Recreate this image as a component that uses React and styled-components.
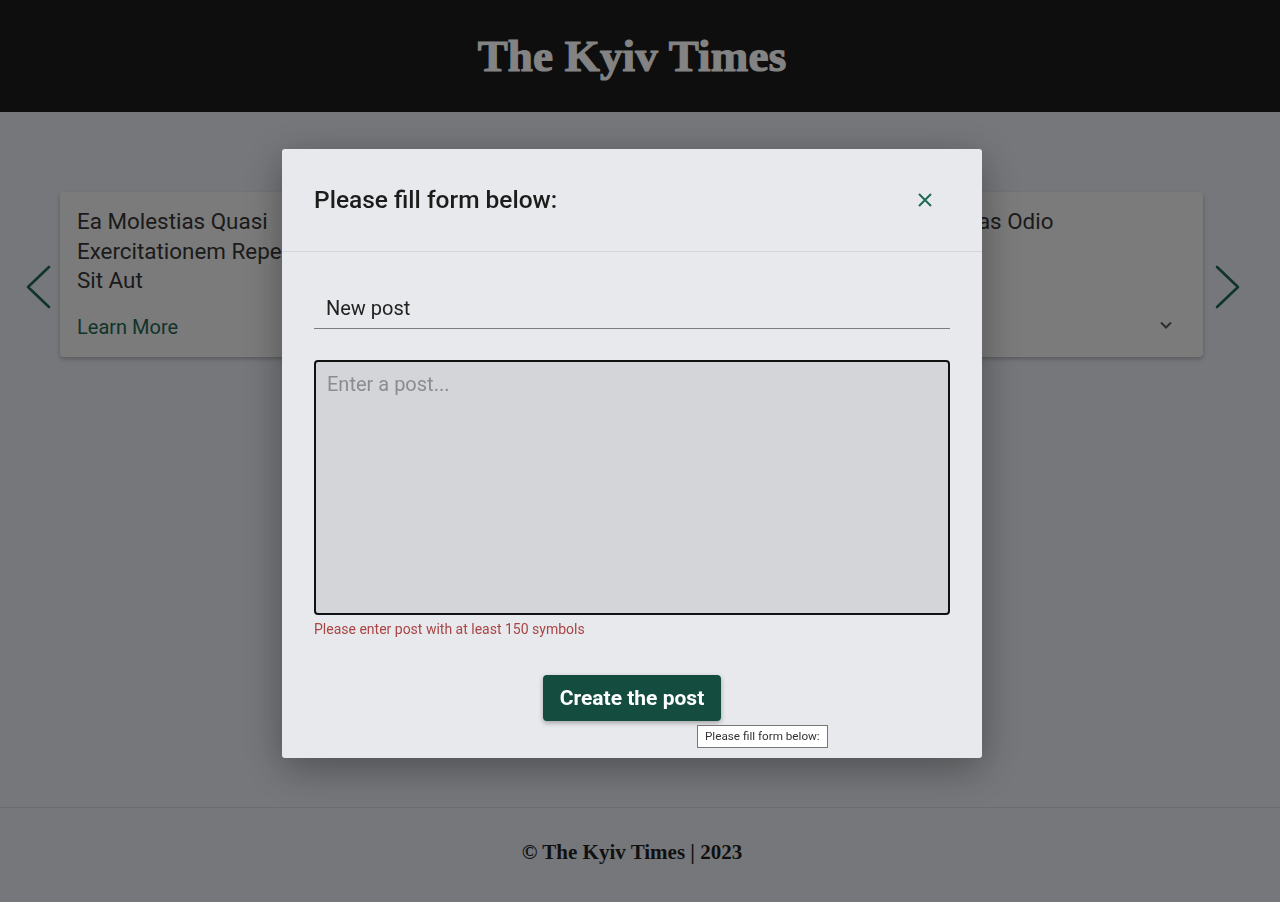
import React, { useState } from "react";
import styled, { createGlobalStyle } from "styled-components";

const GlobalStyle = createGlobalStyle`
  * {
    box-sizing: border-box;
  }
  html, body {
    margin: 0;
    padding: 0;
    background: #dadce2;
  }
  body {
    font-family: Roboto, "Liberation Sans", sans-serif;
  }
`;

const posts = [
  { id: 3, title: "Ea Molestias Quasi Exercitationem Repellat Qui Ipsa Sit Aut" },
  { id: 4, title: "Eum Et Est Occaecati" },
  { id: 5, title: "Nesciunt Quas Odio" },
];

function Arrow({ dir }) {
  const d = dir === "left" ? "M24 2 L3 22 L24 42" : "M2 2 L23 22 L2 42";
  return (
    <svg width="26" height="44" viewBox="0 0 26 44" fill="none">
      <path d={d} stroke="#1f5f4f" strokeWidth="2.6" strokeLinecap="round" strokeLinejoin="round" />
    </svg>
  );
}

function Chevron() {
  return (
    <svg width="14" height="10" viewBox="0 0 14 10" fill="none">
      <path d="M2 2.5 L7 7.5 L12 2.5" stroke="#555" strokeWidth="2" />
    </svg>
  );
}

function CloseIcon() {
  return (
    <svg width="16" height="16" viewBox="0 0 16 16" fill="none">
      <path d="M2 2 L14 14 M14 2 L2 14" stroke="#1d6b55" strokeWidth="2" />
    </svg>
  );
}

export default function App() {
  const [title, setTitle] = useState("New post");
  const [body, setBody] = useState("");

  return (
    <Page>
      <GlobalStyle />
      <Header>
        <Logo>The Kyiv Times</Logo>
      </Header>

      <Main>
        <Carousel>
          <ArrowButton $side="left">
            <Arrow dir="left" />
          </ArrowButton>
          <Track>
            {posts.map((p) => (
              <Card key={p.id}>
                <CardTitle>{p.title}</CardTitle>
                <CardFooter>
                  <LearnMore>Learn More</LearnMore>
                  <ExpandButton>
                    <Chevron />
                  </ExpandButton>
                </CardFooter>
              </Card>
            ))}
          </Track>
          <ArrowButton $side="right">
            <Arrow dir="right" />
          </ArrowButton>
        </Carousel>
      </Main>

      <Footer>© The Kyiv Times | 2023</Footer>

      <Backdrop>
        <Modal>
          <ModalHeader>
            <ModalTitle>Please fill form below:</ModalTitle>
            <CloseButton>
              <CloseIcon />
            </CloseButton>
          </ModalHeader>
          <ModalBody>
            <TitleInput value={title} onChange={(e) => setTitle(e.target.value)} />
            <PostArea
              autoFocus
              placeholder="Enter a post..."
              value={body}
              onChange={(e) => setBody(e.target.value)}
            />
            <ErrorText>Please enter post with at least 150 symbols</ErrorText>
            <ButtonRow>
              <SubmitButton>
                Create the post
                <Tooltip>Please fill form below:</Tooltip>
              </SubmitButton>
            </ButtonRow>
          </ModalBody>
        </Modal>
      </Backdrop>
    </Page>
  );
}

const Page = styled.div`
  min-height: 902px;
  display: flex;
  flex-direction: column;
  background: #dadce2;
`;

const Header = styled.header`
  height: 112px;
  padding-right: 16px;
  background: #1a1a1a;
  display: flex;
  align-items: center;
  justify-content: center;
`;

const Logo = styled.h1`
  margin: 0;
  font-family: "Liberation Serif", "DejaVu Serif", serif;
  font-weight: 700;
  font-size: 45px;
  color: #f2f2f2;
  letter-spacing: 0.2px;
  -webkit-text-stroke: 1.2px #f2f2f2;
`;

const Main = styled.main`
  flex: 1;
  padding-top: 80px;
`;

const Carousel = styled.div`
  display: flex;
  align-items: flex-start;
  padding-left: 25px;
`;

const ArrowButton = styled.div`
  display: flex;
  width: 26px;
  margin: ${(p) => (p.$side === "left" ? "73px 9px 0 0" : "73px 0 0 12px")};
`;

const Track = styled.div`
  width: 1143px;
  display: flex;
  justify-content: space-between;
`;

const Card = styled.div`
  width: 364px;
  min-height: 165px;
  display: flex;
  flex-direction: column;
  padding: 15px 17px 18px;
  background: #e4e4e4;
  border-radius: 4px;
  box-shadow: 0 2px 4px rgba(0, 0, 0, 0.25);
`;

const CardTitle = styled.div`
  font-size: 22.4px;
  line-height: 29.5px;
  color: #333;
`;

const CardFooter = styled.div`
  margin-top: auto;
  padding-top: 14px;
  display: flex;
  align-items: center;
  justify-content: space-between;
`;

const LearnMore = styled.span`
  font-size: 20px;
  line-height: 24px;
  color: #225f4f;
`;

const ExpandButton = styled.span`
  display: flex;
  margin-right: 13px;
  margin-top: -4px;
`;

const Footer = styled.footer`
  height: 95px;
  padding: 0 16px 5px 0;
  border-top: 1px solid #c5c7cc;
  display: flex;
  align-items: center;
  justify-content: center;
  font-family: "Liberation Serif", "DejaVu Serif", serif;
  font-weight: 700;
  font-size: 21px;
  color: #1f1f1f;
`;

const Backdrop = styled.div`
  position: fixed;
  inset: 0;
  background: rgba(0, 0, 0, 0.46);
  display: flex;
  align-items: center;
  justify-content: center;
  padding: 4px 16px 0 0;
`;

const Modal = styled.div`
  width: 700px;
  background: #e8e9ec;
  border-radius: 3px;
  box-shadow: 0 10px 40px rgba(0, 0, 0, 0.35);
`;

const ModalHeader = styled.div`
  height: 103px;
  padding: 0 49px 0 32px;
  display: flex;
  align-items: center;
  justify-content: space-between;
  border-bottom: 1px solid #d5d6da;
`;

const ModalTitle = styled.h2`
  margin: 0;
  font-size: 24.5px;
  font-weight: 500;
  color: #1c1c1c;
`;

const CloseButton = styled.button`
  border: none;
  background: none;
  padding: 0;
  display: flex;
  cursor: pointer;
`;

const ModalBody = styled.div`
  padding: 36px 32px 37px;
  display: flex;
  flex-direction: column;
`;

const TitleInput = styled.input`
  height: 41px;
  padding: 0 12px;
  border: none;
  border-bottom: 1px solid #7c7c80;
  background: transparent;
  font-family: Roboto, sans-serif;
  font-size: 20px;
  color: #222;
  outline: none;
`;

const PostArea = styled.textarea`
  margin-top: 31px;
  height: 255px;
  padding: 8px 11px;
  border: 2px solid #111;
  border-radius: 4px;
  background: #d4d5d9;
  font-family: Roboto, sans-serif;
  font-size: 20px;
  line-height: 28px;
  color: #222;
  caret-color: #111;
  resize: none;
  outline: none;
  &::placeholder {
    color: #8c8c90;
  }
`;

const ErrorText = styled.div`
  margin-top: 6px;
  font-size: 14px;
  color: #a94545;
`;

const ButtonRow = styled.div`
  margin-top: 38px;
  display: flex;
  justify-content: center;
`;

const SubmitButton = styled.button`
  position: relative;
  width: 178px;
  height: 46px;
  border: none;
  border-radius: 4px;
  background: #144d40;
  color: #fff;
  font-family: Roboto, sans-serif;
  font-weight: 700;
  font-size: 21px;
  box-shadow: 0 2px 5px rgba(0, 0, 0, 0.3);
  cursor: pointer;
`;

const Tooltip = styled.span`
  position: absolute;
  left: 154px;
  top: 50px;
  padding: 4px 7px;
  background: #fff;
  border: 1px solid #777;
  font-family: Roboto, sans-serif;
  font-weight: 400;
  font-size: 11.7px;
  line-height: 13px;
  color: #333;
  white-space: nowrap;
`;
